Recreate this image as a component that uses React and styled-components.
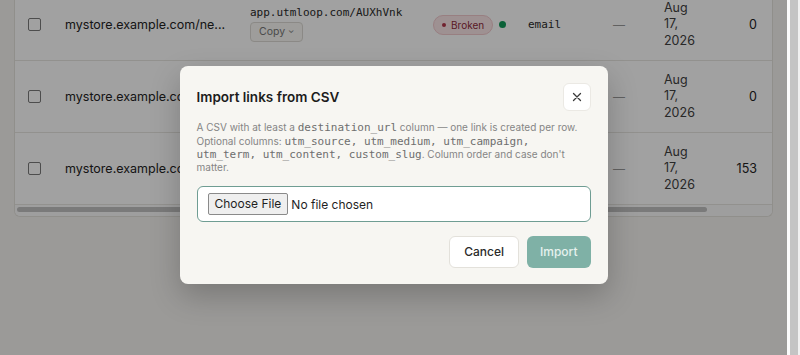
import styled, { createGlobalStyle } from "styled-components";

const GlobalStyle = createGlobalStyle`
  html, body {
    margin: 0;
    padding: 0;
    height: 100%;
    overflow: hidden;
  }
  body {
    background: #f5f4f1;
    font-family: Inter, "Liberation Sans", sans-serif;
    color: #1f1f1f;
  }
`;

const links = [
  { url: "mystore.example.com/ne...", short: "app.utmloop.com/AUXhVnk", clicks: 0 },
  { url: "mystore.example.com/ne...", short: "app.utmloop.com/bT3kQpz", clicks: 0 },
  { url: "mystore.example.com/sa...", short: "app.utmloop.com/Zr8mNw2", clicks: 153 },
];

function App() {
  return (
    <Frame>
      <GlobalStyle />
      <Viewport>
        <Page>
          <Card>
            {links.map((link, i) => (
              <Row key={i}>
                <Cell>
                  <Checkbox />
                </Cell>
                <Cell>
                  <UrlText>{link.url}</UrlText>
                </Cell>
                <Cell>
                  <ShortCol>
                    <Mono>{link.short}</Mono>
                    <CopyBtn>
                      Copy <Chevron>⌄</Chevron>
                    </CopyBtn>
                  </ShortCol>
                </Cell>
                <Cell>
                  <StatusBadge>
                    <BadgeDot />
                    Broken
                  </StatusBadge>
                  <LiveDot />
                </Cell>
                <Cell>
                  <Mono>email</Mono>
                </Cell>
                <Cell>
                  <Dash>—</Dash>
                </Cell>
                <Cell>
                  <DateText>Aug 17, 2026</DateText>
                </Cell>
                <Cell $right>
                  <Count>{link.clicks}</Count>
                </Cell>
              </Row>
            ))}
            <HScroll>
              <HThumb />
            </HScroll>
          </Card>
        </Page>

        <Overlay>
          <Modal>
            <ModalHeader>
              <ModalTitle>Import links from CSV</ModalTitle>
              <CloseBtn aria-label="Close">
                <svg width="10" height="10" viewBox="0 0 10 10">
                  <path d="M1.5 1.5l7 7M8.5 1.5l-7 7" stroke="#3a3a3a" strokeWidth="1.3" strokeLinecap="round" />
                </svg>
              </CloseBtn>
            </ModalHeader>
            <Description>
              A CSV with at least a <Code>destination_url</Code> column — one link is created per row.
              Optional columns:{" "}
              <Code>utm_source, utm_medium, utm_campaign, utm_term, utm_content, custom_slug</Code>. Column
              order and case don't matter.
            </Description>
            <FileInput type="file" accept=".csv" />
            <Actions>
              <CancelBtn>Cancel</CancelBtn>
              <ImportBtn disabled>Import</ImportBtn>
            </Actions>
          </Modal>
        </Overlay>
      </Viewport>
      <ScrollTrack>
        <ScrollThumb />
      </ScrollTrack>
    </Frame>
  );
}

export default App;

const Frame = styled.div`
  display: flex;
  width: 100vw;
  height: 100vh;
  overflow: hidden;
`;

const Viewport = styled.div`
  position: relative;
  flex: 1;
  overflow: hidden;
`;

const Page = styled.div`
  padding: 0 14px;
`;

const Card = styled.div`
  margin-top: -11px;
  background: #fff;
  border: 1px solid #e4e2dc;
  border-top: none;
  border-radius: 0 0 6px 6px;
`;

const Row = styled.div`
  display: grid;
  grid-template-columns: 50px 185px 183px 95px 85px 51px 56px 1fr;
  align-items: center;
  box-sizing: border-box;
  height: 72px;
  border-bottom: 1px solid #e8e6e1;
`;

const Cell = styled.div`
  display: flex;
  align-items: center;
  justify-content: ${(p) => (p.$right ? "flex-end" : "flex-start")};
  padding-right: ${(p) => (p.$right ? "15px" : "0")};
  min-width: 0;
`;

const Checkbox = styled.span`
  width: 11px;
  height: 11px;
  margin-left: 13px;
  border: 1px solid #7a7a7a;
  border-radius: 2px;
  background: #fff;
`;

const UrlText = styled.span`
  font-size: 12.5px;
  color: #232323;
  white-space: nowrap;
`;

const ShortCol = styled.div`
  display: flex;
  flex-direction: column;
  align-items: flex-start;
  gap: 3px;
  margin-top: -2px;
`;

const Mono = styled.span`
  font-family: "DejaVu Sans Mono", "Liberation Mono", monospace;
  font-size: 11px;
  color: #2a2a2a;
  white-space: nowrap;
`;

const CopyBtn = styled.span`
  display: inline-flex;
  align-items: center;
  gap: 3px;
  height: 20px;
  box-sizing: border-box;
  padding: 0 8px;
  border: 1px solid #dcdad4;
  border-radius: 4px;
  background: #faf9f6;
  font-size: 10.5px;
  color: #777;
`;

const Chevron = styled.span`
  font-size: 8px;
  margin-top: -4px;
`;

const StatusBadge = styled.span`
  display: inline-flex;
  align-items: center;
  gap: 5px;
  height: 20px;
  box-sizing: border-box;
  padding: 0 8px;
  border: 1px solid #f1c9cd;
  border-radius: 10px;
  background: #fbe6e8;
  font-size: 10px;
  color: #8e2a3a;
`;

const BadgeDot = styled.span`
  width: 4px;
  height: 4px;
  border-radius: 50%;
  background: #b3364a;
`;

const LiveDot = styled.span`
  width: 7px;
  height: 7px;
  margin-left: 6px;
  border-radius: 50%;
  background: #129a5a;
`;

const Dash = styled.span`
  color: #9a9a9a;
  font-size: 12px;
`;

const DateText = styled.span`
  max-width: 36px;
  font-size: 12.5px;
  line-height: 16.5px;
  color: #404040;
`;

const Count = styled.span`
  font-size: 12.5px;
  color: #222;
`;

const HScroll = styled.div`
  height: 9px;
  padding: 2px 2px 0;
  background: #fafafa;
  border-radius: 0 0 6px 6px;
`;

const HThumb = styled.div`
  width: 690px;
  height: 5px;
  border-radius: 3px;
  background: #c1c1c1;
`;

const ScrollTrack = styled.div`
  width: 13px;
  background: #f1f1f1;
  border-left: 3px solid #fbfbfb;
  box-sizing: border-box;
  padding: 0 2px 0 0;
`;

const ScrollThumb = styled.div`
  height: 100%;
  background: #c4c4c4;
`;

const Overlay = styled.div`
  position: absolute;
  inset: 0;
  display: flex;
  align-items: center;
  justify-content: center;
  padding-bottom: 5px;
  background: rgba(0, 0, 0, 0.37);
`;

const Modal = styled.div`
  width: 428px;
  box-sizing: border-box;
  padding: 17px 17px 16px;
  background: #f7f6f2;
  border-radius: 8px;
  box-shadow: 0 12px 30px rgba(0, 0, 0, 0.22);
`;

const ModalHeader = styled.div`
  display: flex;
  align-items: center;
  justify-content: space-between;
`;

const ModalTitle = styled.h2`
  margin: 0;
  font-size: 13.5px;
  font-weight: 600;
  color: #1c1c1c;
`;

const CloseBtn = styled.button`
  display: flex;
  align-items: center;
  justify-content: center;
  width: 28px;
  height: 28px;
  padding: 0;
  border: 1px solid #ebe9e4;
  border-radius: 6px;
  background: #fff;
  cursor: pointer;
`;

const Description = styled.p`
  margin: 10px 0 0;
  font-size: 10px;
  line-height: 13.4px;
  color: #858585;
`;

const Code = styled.code`
  font-family: "DejaVu Sans Mono", "Liberation Mono", monospace;
  font-size: 11px;
  color: #6e6e6e;
`;

const FileInput = styled.input`
  display: block;
  box-sizing: border-box;
  width: 100%;
  height: 36px;
  margin-top: 11px;
  padding: 6px 10px;
  border: 1px solid #6f9d93;
  border-radius: 6px;
  background: #fff;
  font-family: Inter, "Liberation Sans", sans-serif;
  font-size: 12px;
  color: #1f1f1f;

  &::file-selector-button {
    height: 22px;
    margin-right: 3px;
    padding: 0 6px;
    border: 1px solid #8a8a8a;
    border-radius: 2px;
    background: #efefef;
    font-family: inherit;
    font-size: 12px;
    color: #1f1f1f;
  }
`;

const Actions = styled.div`
  display: flex;
  justify-content: flex-end;
  gap: 8px;
  margin-top: 14px;
`;

const BaseBtn = styled.button`
  height: 32px;
  padding: 0 14px;
  border-radius: 6px;
  font-family: Inter, "Liberation Sans", sans-serif;
  font-size: 12px;
  font-weight: 500;
`;

const CancelBtn = styled(BaseBtn)`
  border: 1px solid #e3e1db;
  background: #fff;
  color: #2a2a2a;
`;

const ImportBtn = styled(BaseBtn)`
  padding: 0 13px;
  border: none;
  background: #7fb1a6;
  color: #e6f1ee;
`;
